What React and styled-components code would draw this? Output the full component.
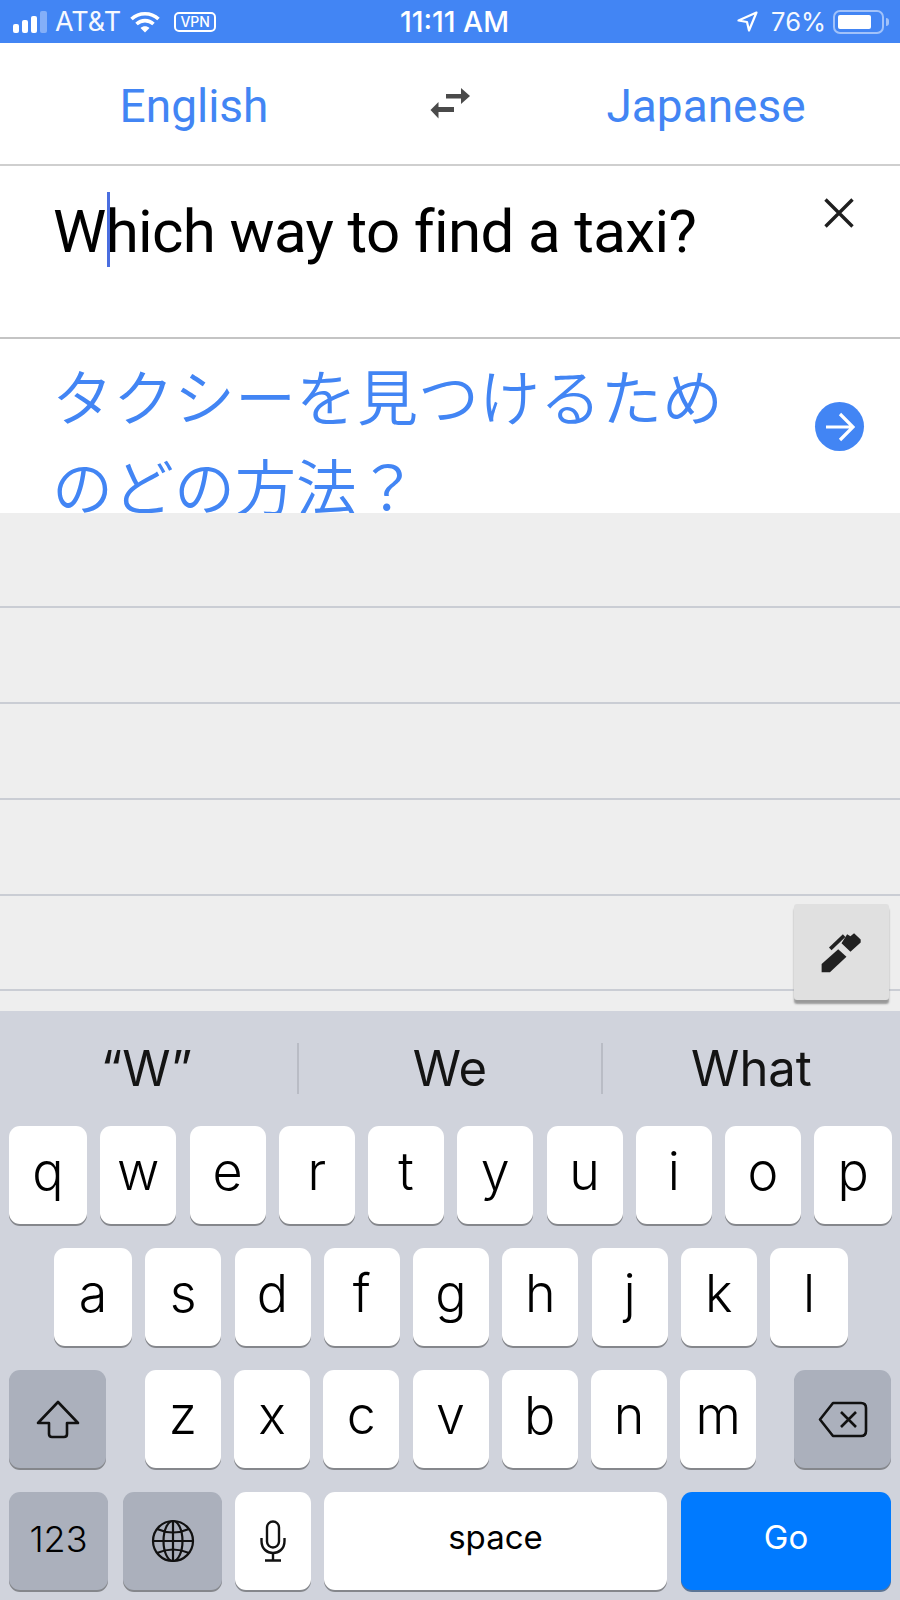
import styled, { createGlobalStyle } from "styled-components";

const GlobalStyle = createGlobalStyle`
  * {
    box-sizing: border-box;
  }

  body {
    margin: 0;
    background: #d0d3dc;
    font-family: Inter, "Noto Sans CJK JP", sans-serif;
  }
`;

const ROW_ONE = ["q", "w", "e", "r", "t", "y", "u", "i", "o", "p"];
const ROW_TWO = ["a", "s", "d", "f", "g", "h", "j", "k", "l"];
const ROW_THREE = ["z", "x", "c", "v", "b", "n", "m"];

function SignalBars() {
  return (
    <svg width="35" height="22" viewBox="0 0 35 22">
      <rect x="0" y="13" width="6" height="9" rx="2" fill="#fff" />
      <rect x="9" y="9" width="6" height="13" rx="2" fill="#fff" />
      <rect x="18" y="5" width="6" height="17" rx="2" fill="#fff" />
      <rect x="27" y="0" width="7" height="22" rx="2" fill="#fff" opacity="0.35" />
    </svg>
  );
}

function WifiIcon() {
  return (
    <svg width="30" height="22" viewBox="0 0 30 22" fill="none" stroke="#fff" strokeWidth="3.6">
      <path d="M1.5 8 C9 1 21 1 28.5 8" />
      <path d="M6.5 13 C11.5 8.5 18.5 8.5 23.5 13" />
      <path d="M10.5 17 L15 21.5 L19.5 17 C17 14.5 13 14.5 10.5 17 Z" fill="#fff" stroke="none" />
    </svg>
  );
}

function LocationIcon() {
  return (
    <svg width="21" height="21" viewBox="0 0 21 21" fill="none" stroke="#fff" strokeWidth="2.2" strokeLinejoin="round">
      <path d="M19.5 1.5 L1.5 9.5 L10 11 L12 19.5 Z" />
    </svg>
  );
}

function SwapIcon() {
  return (
    <svg width="40" height="31" viewBox="10 9 40 31" fill="#4a4a4a">
      <path d="M26 15 H41 V9 L50 17 L41 25 V19.5 H26 Z" />
      <path d="M34 28 H18.5 V23 L10.5 31 L18.5 39.5 V33 H34 Z" />
    </svg>
  );
}

function CloseIcon() {
  return (
    <svg width="30" height="30" viewBox="0 0 30 30" stroke="#1f1f1f" strokeWidth="3.4">
      <path d="M1.5 1.5 L28.5 28.5 M28.5 1.5 L1.5 28.5" />
    </svg>
  );
}

function ArrowIcon() {
  return (
    <svg width="30" height="30" viewBox="0 0 30 30" fill="none" stroke="#fff" strokeWidth="3.2">
      <path d="M1 15 H28 M15 2 L28 15 L15 28" />
    </svg>
  );
}

function PenIcon() {
  return (
    <svg width="43" height="43" viewBox="360 150 130 130" fill="#212121">
      <path d="M365 275 V250 L415 205 L440 228 L390 275 Z" />
      <path d="M425 187 L452 213 L483 185 V176 L463 157 L452 166 L442 160 Z" />
      <path d="M391 204 L433 164" stroke="#212121" strokeWidth="11" />
    </svg>
  );
}

function ShiftIcon() {
  return (
    <svg width="44" height="39" viewBox="0 0 44 39" fill="none" stroke="#111" strokeWidth="2.6" strokeLinejoin="round">
      <path d="M22 2 L42 23 H31 V34 Q31 37 28 37 H16 Q13 37 13 34 V23 H2 Z" />
    </svg>
  );
}

function DeleteIcon() {
  return (
    <svg width="50" height="37" viewBox="0 0 50 37" fill="none" stroke="#111" strokeWidth="2.6" strokeLinejoin="round">
      <path d="M15 2 H43 Q48 2 48 7 V30 Q48 35 43 35 H15 L2 18.5 Z" />
      <path d="M23 11 L38 26 M38 11 L23 26" />
    </svg>
  );
}

function GlobeIcon() {
  return (
    <svg width="44" height="44" viewBox="0 0 44 44" fill="none" stroke="#111" strokeWidth="2.2">
      <circle cx="22" cy="22" r="20" />
      <ellipse cx="22" cy="22" rx="9.5" ry="20" />
      <path d="M22 2 V42 M2 22 H42" />
      <path d="M6 10 Q22 17 38 10 M6 34 Q22 27 38 34" />
    </svg>
  );
}

function MicIcon() {
  return (
    <svg width="26" height="42" viewBox="0 0 26 42" fill="none" stroke="#111" strokeWidth="2.4">
      <rect x="7" y="1.5" width="12" height="26" rx="6" />
      <path d="M1.5 18 V21 C1.5 37 24.5 37 24.5 21 V18" />
      <path d="M13 33 V40 M5 40.5 H21" />
    </svg>
  );
}

export default function App() {
  return (
    <Page>
      <GlobalStyle />

      <StatusBar>
        <StatusGroup>
          <SignalBars />
          <Carrier>AT&amp;T</Carrier>
          <WifiIcon />
          <VpnBadge>VPN</VpnBadge>
        </StatusGroup>
        <Clock>11:11 AM</Clock>
        <StatusRight>
          <LocationIcon />
          <Percent>76%</Percent>
          <Battery>
            <BatteryFill />
          </Battery>
        </StatusRight>
      </StatusBar>

      <LanguageBar>
        <Language>English</Language>
        <SwapIcon />
        <Language>Japanese</Language>
      </LanguageBar>

      <InputArea>
        <InputText>
          W<Caret />hich way to find a taxi?
        </InputText>
        <CloseIcon />
      </InputArea>

      <ResultArea>
        <ResultText lang="ja">タクシーを見つけるためのどの方法？</ResultText>
        <GoCircle>
          <ArrowIcon />
        </GoCircle>
      </ResultArea>

      <History>
        <HistoryLine />
        <HistoryLine />
        <HistoryLine />
        <HistoryLine />
        <HistoryLine />
        <PenButton>
          <PenIcon />
        </PenButton>
      </History>

      <Keyboard>
        <Suggestions>
          <Suggestion>“W”</Suggestion>
          <Suggestion>We</Suggestion>
          <Suggestion>What</Suggestion>
        </Suggestions>

        <KeyRow>
          {ROW_ONE.map((k, i) => (
            <Key key={k} $width={i === 0 || i === 9 ? 78 : 76}>
              {k}
            </Key>
          ))}
        </KeyRow>

        <KeyRow $inset={54}>
          {ROW_TWO.map((k, i) => (
            <Key key={k} $width={i === 0 || i === 8 ? 78 : 76}>
              {k}
            </Key>
          ))}
        </KeyRow>

        <SplitRow>
          <Key $width={97} $dark $icon>
            <ShiftIcon />
          </Key>
          <LetterGroup>
            {ROW_THREE.map((k) => (
              <Key key={k} $width={76}>
                {k}
              </Key>
            ))}
          </LetterGroup>
          <Key $width={97} $dark $icon>
            <DeleteIcon />
          </Key>
        </SplitRow>

        <BottomRow>
          <Key $width={99} $dark $small>
            123
          </Key>
          <GlobeKey $width={99} $dark $icon>
            <GlobeIcon />
          </GlobeKey>
          <Key $width={76} $icon>
            <MicIcon />
          </Key>
          <Key $width={343} $label>
            space
          </Key>
          <GoKey $width={210} $label>
            Go
          </GoKey>
        </BottomRow>
      </Keyboard>
    </Page>
  );
}

const Page = styled.div`
  width: 900px;
  height: 1600px;
  overflow: hidden;
  display: flex;
  flex-direction: column;
  background: #fff;
`;

const StatusBar = styled.div`
  height: 43px;
  padding: 0 16px 0 13px;
  background: #4285f4;
  color: #fff;
  display: grid;
  grid-template-columns: 1fr auto 1fr;
  align-items: center;
`;

const StatusGroup = styled.div`
  display: flex;
  align-items: center;
  gap: 7px;

  > :nth-child(3) {
    margin-left: 2px;
  }

  > :nth-child(4) {
    margin-left: 7px;
  }
`;

const StatusRight = styled(StatusGroup)`
  justify-content: flex-end;
  gap: 7px;

  > :nth-child(2) {
    margin-left: 6px;
  }

  > :nth-child(3) {
    margin-left: 0;
  }
`;

const Carrier = styled.span`
  font-size: 27px;
  opacity: 0.95;
`;

const Percent = styled.span`
  font-size: 25.5px;
  opacity: 0.95;
`;

const Clock = styled.span`
  font-size: 28.3px;
  font-weight: 500;
  margin-left: 12px;
`;

const VpnBadge = styled.span`
  width: 42px;
  height: 20px;
  border: 2px solid #fff;
  border-radius: 5px;
  font-size: 14px;
  line-height: 16px;
  font-weight: 500;
  text-align: center;
`;

const Battery = styled.div`
  position: relative;
  width: 51px;
  height: 24px;
  padding: 3px;
  border: 2px solid rgba(255, 255, 255, 0.5);
  border-radius: 7px;

  &::after {
    content: "";
    position: absolute;
    right: -7px;
    top: 6px;
    width: 3px;
    height: 8px;
    border-radius: 0 3px 3px 0;
    background: rgba(255, 255, 255, 0.5);
  }
`;

const BatteryFill = styled.div`
  width: 80%;
  height: 100%;
  background: #fff;
  border-radius: 2px;
`;

const LanguageBar = styled.div`
  height: 123px;
  border-bottom: 2px solid #cfcfcf;
  display: grid;
  grid-template-columns: 388px 1fr 388px;
  align-items: center;
  justify-items: center;
`;

const Language = styled.span`
  margin-top: 5px;
  font-family: Roboto, sans-serif;
  font-size: 46px;
  color: #4285f4;
`;

const InputArea = styled.div`
  height: 173px;
  padding: 32px 46px 0 53px;
  border-bottom: 2px solid #c4c4c4;
  display: flex;
  justify-content: space-between;
  align-items: flex-start;
`;

const InputText = styled.div`
  position: relative;
  margin-top: -1px;
  font-family: Roboto, sans-serif;
  font-size: 60px;
  line-height: 70px;
  letter-spacing: -0.62px;
  color: #000;
  white-space: nowrap;
`;

const Caret = styled.span`
  position: absolute;
  left: 54px;
  top: -5px;
  width: 3px;
  height: 75px;
  background: #4a6ee0;
`;

const ResultArea = styled.div`
  height: 174px;
  padding: 11px 36px 0 52px;
  display: flex;
  justify-content: space-between;
  align-items: flex-start;
  overflow: hidden;
`;

const ResultText = styled.div`
  width: 700px;
  font-family: "Noto Sans CJK JP", sans-serif;
  font-size: 61px;
  font-weight: 350;
  line-height: 90px;
  color: #4285f4;
`;

const GoCircle = styled.div`
  width: 49px;
  height: 49px;
  margin-top: 52px;
  border-radius: 50%;
  background: #4285f4;
  display: flex;
  align-items: center;
  justify-content: center;
`;

const History = styled.div`
  position: relative;
  height: 498px;
  background: #eeeeee;
`;

const HistoryLine = styled.div`
  height: 96px;
  border-bottom: 2px solid #cacdd4;

  &:first-child,
  &:nth-child(5) {
    height: 95px;
  }
`;

const PenButton = styled.div`
  position: absolute;
  right: 11px;
  top: 391px;
  width: 95px;
  height: 96px;
  border-radius: 3px;
  background: #e0e0e0;
  box-shadow: 0 4px 2px #999;
  display: flex;
  align-items: center;
  justify-content: center;
`;

const Keyboard = styled.div`
  flex: 1;
  background: #d0d3dc;
  display: flex;
  flex-direction: column;
  gap: 24px;
`;

const Suggestions = styled.div`
  height: 91px;
  padding: 32px 0 0;
  display: grid;
  grid-template-columns: 297px 304px 1fr;
`;

const Suggestion = styled.div`
  height: 51px;
  display: flex;
  align-items: center;
  justify-content: center;
  font-size: 49px;
  color: #141414;

  &:first-child {
    padding-right: 4px;
  }

  & + & {
    border-left: 2px solid #b9bcc5;
  }
`;

const KeyRow = styled.div`
  display: flex;
  gap: 13.25px;
  padding-left: ${(props) => props.$inset || 9}px;
`;

const BottomRow = styled(KeyRow)`
  gap: 13px;
`;

const SplitRow = styled.div`
  display: flex;
  justify-content: space-between;
  padding: 0 9px;
`;

const LetterGroup = styled.div`
  display: flex;
  gap: 13.25px;
  margin-left: 1px;
`;

const Key = styled.div`
  width: ${(props) => props.$width}px;
  height: 98px;
  padding-bottom: ${(props) => (props.$icon ? 0 : props.$small ? 4 : 8)}px;
  border-radius: 11px;
  background: ${(props) => (props.$dark ? "#abb0bc" : "#fff")};
  box-shadow: 0 2px 0 #85878c;
  display: flex;
  align-items: center;
  justify-content: center;
  color: #000;
  font-size: ${(props) => (props.$label ? 33 : props.$small ? 36 : 52)}px;
  font-weight: ${(props) => (props.$label ? 400 : 300)};
`;

const GlobeKey = styled(Key)`
  margin-left: 2px;
`;

const GoKey = styled(Key)`
  margin-left: 1px;
  background: #007aff;
  box-shadow: 0 2px 0 #5c7595;
  color: #fff;
`;
